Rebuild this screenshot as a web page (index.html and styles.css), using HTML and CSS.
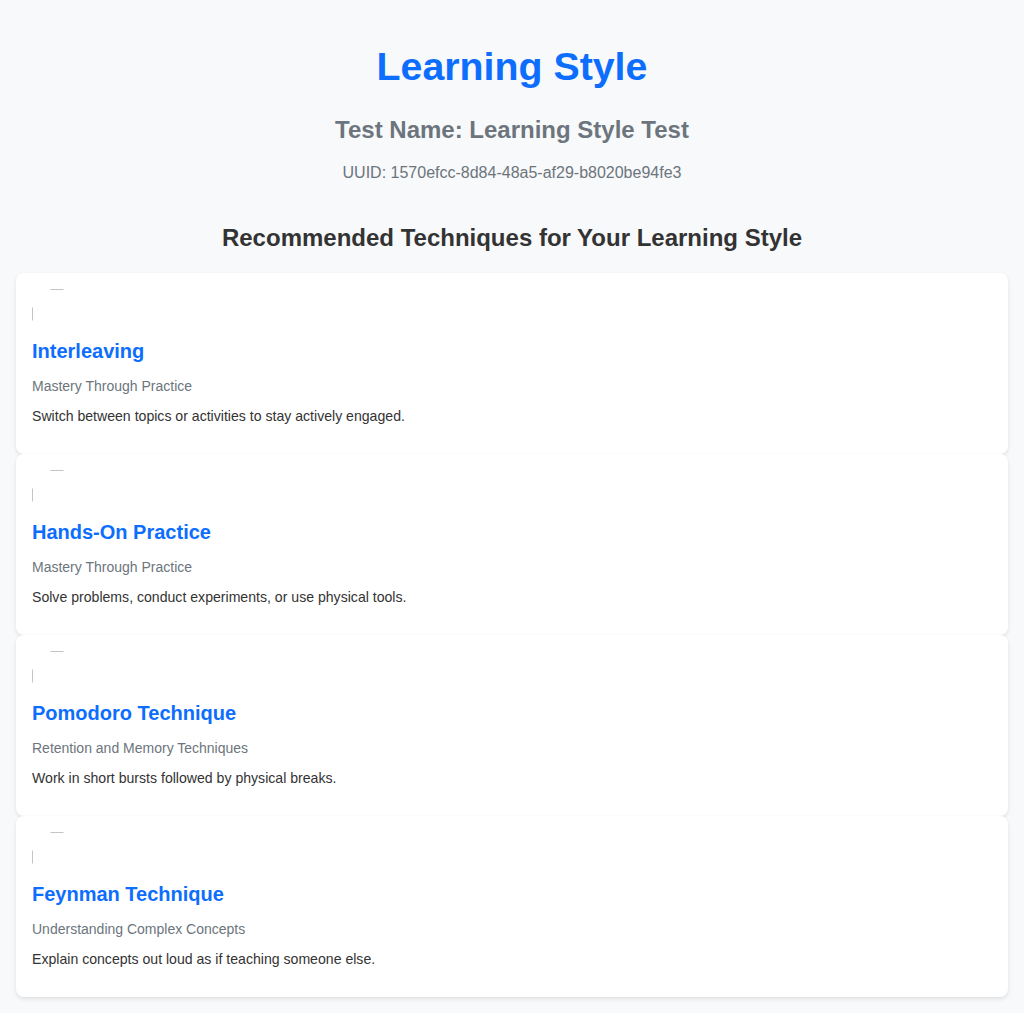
FILE: index.html
```html
<!DOCTYPE html>
<html lang="en">
<head>
<meta charset="utf-8">
<title>Learning Style</title>
<link rel="stylesheet" href="styles.css">
</head>
<body>
<div class="page">
  <header class="header">
    <h1 class="title">Learning Style</h1>
    <h2 class="test-name">Test Name: Learning Style Test</h2>
    <p class="uuid">UUID: 1570efcc-8d84-48a5-af29-b8020be94fe3</p>
  </header>
  <h2 class="section-title">Recommended Techniques for Your Learning Style</h2>
  <div class="list">
    <div class="card">
      <svg class="icon" width="50" height="50" viewBox="0 0 50 50"><path d="M18.5 0.5 H31.5 M0.5 18.5 V31.5" /></svg>
      <h3 class="card-title">Interleaving</h3>
      <p class="card-cat">Mastery Through Practice</p>
      <p class="card-desc">Switch between topics or activities to stay actively engaged.</p>
    </div>
    <div class="card">
      <svg class="icon" width="50" height="50" viewBox="0 0 50 50"><path d="M18.5 0.5 H31.5 M0.5 18.5 V31.5" /></svg>
      <h3 class="card-title">Hands-On Practice</h3>
      <p class="card-cat">Mastery Through Practice</p>
      <p class="card-desc">Solve problems, conduct experiments, or use physical tools.</p>
    </div>
    <div class="card">
      <svg class="icon" width="50" height="50" viewBox="0 0 50 50"><path d="M18.5 0.5 H31.5 M0.5 18.5 V31.5" /></svg>
      <h3 class="card-title">Pomodoro Technique</h3>
      <p class="card-cat">Retention and Memory Techniques</p>
      <p class="card-desc">Work in short bursts followed by physical breaks.</p>
    </div>
    <div class="card">
      <svg class="icon" width="50" height="50" viewBox="0 0 50 50"><path d="M18.5 0.5 H31.5 M0.5 18.5 V31.5" /></svg>
      <h3 class="card-title">Feynman Technique</h3>
      <p class="card-cat">Understanding Complex Concepts</p>
      <p class="card-desc">Explain concepts out loud as if teaching someone else.</p>
    </div>
  </div>
</div>
</body>
</html>
```

FILE: styles.css
```css
html, body {
  margin: 0;
  padding: 0;
  background: #f8f9fa;
}
body {
  font-family: "Liberation Sans", Arial, sans-serif;
  color: #333;
}
.page {
  padding: 16px;
}
.header {
  text-align: center;
}
.title {
  font-size: 39.3px;
  line-height: 46px;
  font-weight: bold;
  color: #0d6efd;
  margin: 27px 0 27px;
}
.test-name {
  font-size: 24px;
  line-height: 28px;
  font-weight: bold;
  color: #6c757d;
  margin: 0 0 20px;
}
.uuid {
  font-size: 16px;
  line-height: 18px;
  color: #6c757d;
  margin: 0;
}
.section-title {
  text-align: center;
  font-size: 24px;
  line-height: 28px;
  font-weight: bold;
  color: #333;
  margin: 42px 0 21px;
}
.list {
  display: flex;
  flex-direction: column;
}
.card {
  background: #fff;
  border-radius: 8px;
  box-shadow: 0 2px 4px rgba(0, 0, 0, 0.1);
  padding: 16px;
}
.icon {
  display: block;
  width: 50px;
  height: 50px;
  fill: none;
  stroke: #c4c4c4;
  stroke-width: 1;
}
.card-title {
  font-size: 20px;
  line-height: 24px;
  font-weight: bold;
  color: #0d6efd;
  margin: 0 0 15px;
}
.card-cat {
  font-size: 14px;
  line-height: 16px;
  color: #6c757d;
  margin: 0 0 14px;
}
.card-desc {
  font-size: 14.1px;
  line-height: 16px;
  color: #333;
  margin: 0 0 14px;
}
```
